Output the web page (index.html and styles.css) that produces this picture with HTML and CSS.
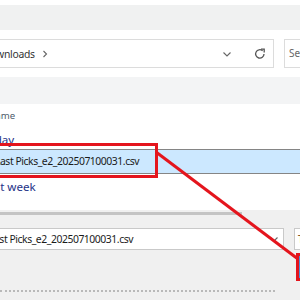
FILE: index.html
```html
<!DOCTYPE html>
<html lang="en">
<head>
    <meta charset="UTF-8">
    <title>Save As</title>
    <link rel="stylesheet" href="styles.css">
</head>
<body>
    <div class="window">
        <div class="titlebar"></div>

        <div class="addressrow">
            <div class="address">
                <span class="crumb">Downloads</span>
                <svg class="sep" width="8" height="10" viewBox="0 0 8 10"><path d="M2.5 2 L5.5 5 L2.5 8" fill="none" stroke="#666" stroke-width="1.1"/></svg>
                <span class="grow"></span>
                <svg class="drop" width="10" height="8" viewBox="0 0 10 8"><path d="M1.5 2.5 L5 6 L8.5 2.5" fill="none" stroke="#666" stroke-width="1.1"/></svg>
                <svg class="refresh" width="14" height="14" viewBox="0 0 14 14"><path d="M11 7 A4.2 4.2 0 1 1 9.6 3.8" fill="none" stroke="#555" stroke-width="1.3"/><path d="M8 2.2 L11.2 2.2 L11.2 5.4" fill="none" stroke="#555" stroke-width="1.3"/></svg>
            </div>
            <div class="search">Search Downloads</div>
        </div>

        <div class="toolbar"></div>

        <div class="list">
            <div class="colhead"><span>Name</span></div>
            <div class="group group-today">Today</div>
            <div class="row selected"><span>Last Picks_e2_202507100031.csv</span></div>
            <div class="group group-week">Last week</div>
        </div>

        <div class="hscroll"><div class="thumb"></div></div>

        <div class="bottom">
            <div class="fieldrow">
                <div class="field">
                    <span class="fname">Last Picks_e2_202507100031.csv</span>
                    <svg class="drop" width="10" height="8" viewBox="0 0 10 8"><path d="M1.5 2.5 L5 6 L8.5 2.5" fill="none" stroke="#666" stroke-width="1.1"/></svg>
                </div>
                <div class="typebox">T</div>
            </div>
            <div class="grip"></div>
        </div>

        <div class="mark mark-row"></div>
        <div class="mark mark-btn"><div class="btn-edge"></div></div>
        <svg class="arrow" width="300" height="300" viewBox="0 0 300 300">
            <line x1="156" y1="152" x2="298" y2="259" stroke="#e4151d" stroke-width="3"/>
        </svg>
    </div>
</body>
</html>
```

FILE: styles.css
```css
* {
  margin: 0;
  padding: 0;
  box-sizing: border-box;
}
body {
  width: 300px;
  height: 300px;
  overflow: hidden;
  font-family: "Noto Sans", "Open Sans", sans-serif;
  font-size: 9.6px;
  color: #1b1b1b;
  background: #fff;
}
.window {
  position: relative;
  width: 300px;
  height: 300px;
  display: flex;
  flex-direction: column;
  overflow: hidden;
}

.titlebar {
  height: 30px;
  background: #f0f1f1;
  border-top: 5px solid #fff;
}

.addressrow {
  height: 47px;
  background: #fff;
  display: flex;
  align-items: flex-start;
  padding-top: 9px;
  gap: 10px;
}
.address {
  width: 278px;
  height: 29px;
  margin-left: -4px;
  border: 1px solid #dcdcdc;
  border-left: none;
  display: flex;
  align-items: center;
  flex-shrink: 0;
}
.crumb {
  margin-left: -13px;
  font-size: 10.4px;
  letter-spacing: -0.3px;
  color: #333;
  white-space: nowrap;
}
.sep {
  margin-left: 6px;
}
.grow {
  flex: 1;
}
.address .drop {
  margin-right: 21px;
}
.refresh {
  margin-right: 6px;
}
.search {
  width: 80px;
  height: 29px;
  flex-shrink: 0;
  border: 1px solid #dcdcdc;
  padding-left: 4px;
  line-height: 27px;
  font-size: 10px;
  color: #666;
  white-space: nowrap;
}

.toolbar {
  height: 27px;
  background: #f3f4f5;
}

.list {
  height: 106px;
  background: #fff;
  display: flex;
  flex-direction: column;
}
.colhead {
  height: 23px;
  line-height: 23px;
  color: #4d5b6b;
  white-space: nowrap;
}
.colhead span {
  margin-left: -12px;
}
.group {
  font-size: 11.6px;
  line-height: 20px;
  color: #1e3287;
  white-space: nowrap;
}
.group-today {
  height: 22px;
  padding-top: 3px;
  text-indent: -18px;
}
.group-week {
  height: 26px;
  padding-top: 3px;
  text-indent: -18px;
}
.row {
  height: 25px;
  line-height: 23px;
  font-size: 10.4px;
  letter-spacing: -0.45px;
  white-space: nowrap;
}
.row span {
  margin-left: -5px;
}
.selected {
  background: #cce8ff;
  border-top: 1px solid #858585;
  border-bottom: 1px solid #858585;
}

.hscroll {
  height: 6px;
  background: #f0f0f0;
  padding-top: 2px;
}
.thumb {
  width: 242px;
  height: 3px;
  background: #c4c4c4;
}

.bottom {
  flex: 1;
  background: #f0f0f0;
  display: flex;
  flex-direction: column;
}
.fieldrow {
  margin-top: 12px;
  display: flex;
  gap: 10px;
}
.field {
  width: 288px;
  height: 22px;
  flex-shrink: 0;
  margin-left: -4px;
  background: #fff;
  border: 1px solid #c9c9c9;
  border-left: none;
  display: flex;
  align-items: center;
  white-space: nowrap;
  overflow: hidden;
}
.fname {
  margin-left: -7px;
  flex: 1;
  font-size: 10.4px;
  letter-spacing: -0.45px;
}
.field .drop {
  margin-right: 4px;
}
.typebox {
  width: 20px;
  height: 22px;
  flex-shrink: 0;
  background: #fff;
  border: 1px solid #c9c9c9;
  padding-left: 3px;
  line-height: 20px;
  color: #8a5a2b;
  font-size: 10px;
}
.grip {
  margin-top: 40px;
  width: 275px;
  height: 2px;
  border-top: 2px dotted #b9b9b9;
}

/* annotation marks over the dialog */
.mark {
  position: absolute;
  border: 3px solid #e4151d;
}
.mark-row {
  left: -3px;
  top: 143px;
  width: 161px;
  height: 35px;
}
.mark-btn {
  left: 296px;
  top: 253px;
  width: 12px;
  height: 28px;
}
.btn-edge {
  width: 2px;
  height: 22px;
  background: #4a90d9;
}
.arrow {
  position: absolute;
  left: 0;
  top: 0;
}
```
